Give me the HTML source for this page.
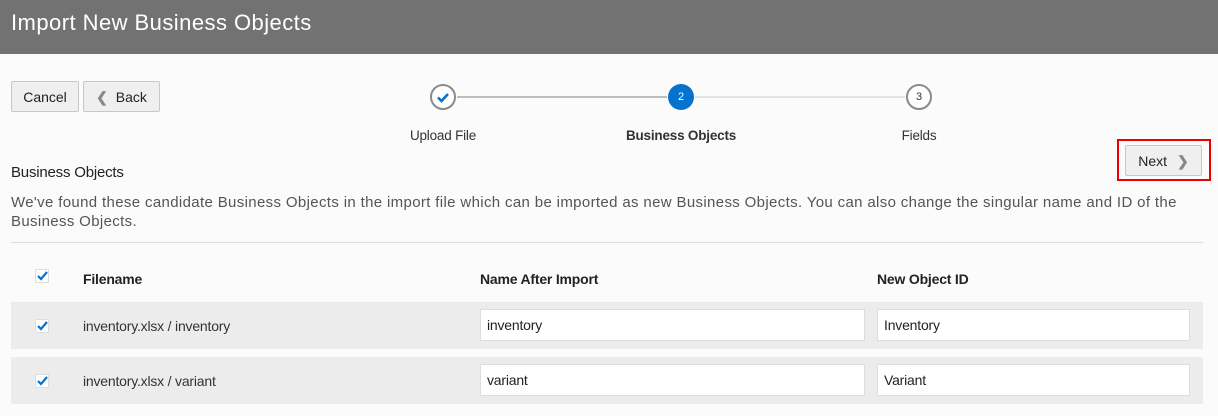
<!DOCTYPE html>
<html><head><style>
body{margin:0;width:1218px;height:416px;background:#fbfbfb;font-family:"Liberation Sans",sans-serif;color:#333;position:relative;overflow:hidden}
.a{position:absolute}
.hdr{left:0;top:0;width:1218px;height:54px;background:#727272;color:#fff;font-size:22px;line-height:46px;padding-left:11px;box-sizing:border-box;letter-spacing:0.45px}
.btn{background:#efefef;border:1px solid #c8c8c8;border-radius:2px;font-size:14px;color:#222;box-sizing:border-box;text-align:center}
.circ{width:26px;height:26px;border-radius:50%;box-sizing:border-box;text-align:center;font-size:11px;line-height:22px}
.lbl{font-size:13.5px;color:#333;text-align:center;width:200px;letter-spacing:-0.2px}
.row{left:11px;width:1192px;height:47px;background:#ececec}
.cb{width:14px;height:14px;background:#fff;border:1px solid #ddd;box-sizing:border-box}
.inp{background:#fff;border:1px solid #ddd;box-sizing:border-box;height:32px;font-size:14px;line-height:30px;padding-left:6px;color:#222;letter-spacing:-0.2px}
.t{letter-spacing:-0.2px}
</style></head><body>
<div class="a hdr">Import New Business Objects</div>
<div class="a btn" style="left:11px;top:81px;width:68px;height:31px;line-height:31px">Cancel</div>
<div class="a btn" style="left:83px;top:81px;width:77px;height:31px;line-height:31px"><span style="color:#888;font-weight:bold;margin-right:8px">&#10094;</span>Back</div>
<div class="a" style="left:457px;top:96px;width:210px;height:2px;background:#bdbdbd"></div>
<div class="a" style="left:695px;top:96px;width:210px;height:2px;background:#e3e3e3"></div>
<div class="a circ" style="left:430px;top:84px;border:2px solid #8a8a8a;background:#fff"><svg width="22" height="22" viewBox="0 0 22 22"><path d="M6 11.5l3.5 3.5 6.5-7" stroke="#0572ce" stroke-width="2.6" fill="none"/></svg></div>
<div class="a circ" style="left:668px;top:84px;background:#0572ce;color:#fff;line-height:26px">2</div>
<div class="a circ" style="left:906px;top:84px;border:2px solid #8a8a8a;background:#fff;color:#333">3</div>
<div class="a lbl" style="left:343px;top:128px">Upload File</div>
<div class="a lbl" style="left:581px;top:128px;font-weight:bold">Business Objects</div>
<div class="a lbl" style="left:819px;top:128px">Fields</div>
<div class="a" style="left:1117px;top:139px;width:94px;height:42px;border:2px solid #e00;box-sizing:border-box"></div>
<div class="a btn" style="left:1125px;top:145px;width:77px;height:31px;line-height:31px">Next<span style="color:#888;font-weight:bold;margin-left:10px">&#10095;</span></div>
<div class="a t" style="left:11px;top:164px;font-size:15px;color:#222">Business Objects</div>
<div class="a" style="left:11px;top:193px;width:1200px;font-size:15px;line-height:19px;color:#555;letter-spacing:0.35px;white-space:nowrap">We've found these candidate Business Objects in the import file which can be imported as new Business Objects. You can also change the singular name and ID of the<br>Business Objects.</div>
<div class="a" style="left:11px;top:242px;width:1192px;height:1px;background:#ddd"></div>
<div class="a cb" style="left:35px;top:269px"><svg class="a" style="left:0;top:-1px" width="14" height="14" viewBox="0 0 14 14"><path d="M2 7l3 3 6-7" stroke="#0572ce" stroke-width="2.2" fill="none"/></svg></div>
<div class="a t" style="left:83px;top:271px;font-size:14px;font-weight:bold;color:#222">Filename</div>
<div class="a t" style="left:480px;top:271px;font-size:14px;font-weight:bold;color:#222">Name After Import</div>
<div class="a t" style="left:877px;top:271px;font-size:14px;font-weight:bold;color:#222">New Object ID</div>
<div class="a row" style="top:302px"></div>
<div class="a row" style="top:357px"></div>
<div class="a cb" style="left:35px;top:319px"><svg class="a" style="left:0;top:-1px" width="14" height="14" viewBox="0 0 14 14"><path d="M2 7l3 3 6-7" stroke="#0572ce" stroke-width="2.2" fill="none"/></svg></div>
<div class="a cb" style="left:35px;top:374px"><svg class="a" style="left:0;top:-1px" width="14" height="14" viewBox="0 0 14 14"><path d="M2 7l3 3 6-7" stroke="#0572ce" stroke-width="2.2" fill="none"/></svg></div>
<div class="a t" style="left:83px;top:318px;font-size:14px;color:#333">inventory.xlsx / inventory</div>
<div class="a t" style="left:83px;top:373px;font-size:14px;color:#333">inventory.xlsx / variant</div>
<div class="a inp" style="left:480px;top:309px;width:385px">inventory</div>
<div class="a inp" style="left:877px;top:309px;width:313px">Inventory</div>
<div class="a inp" style="left:480px;top:364px;width:385px">variant</div>
<div class="a inp" style="left:877px;top:364px;width:313px">Variant</div>
</body></html>
